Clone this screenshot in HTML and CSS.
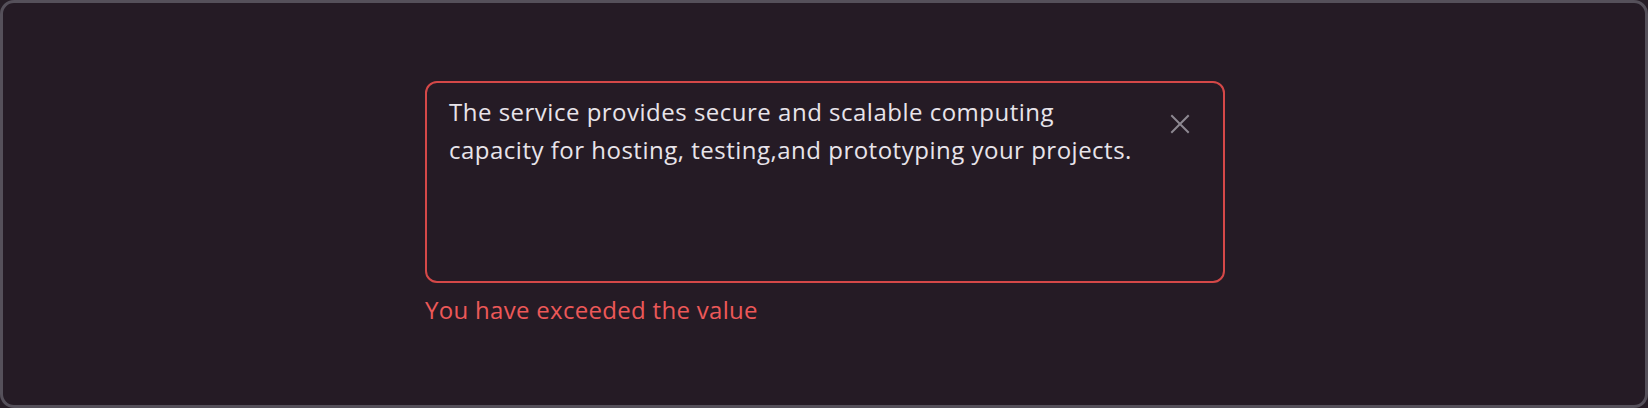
FILE: index.html
```html
<!DOCTYPE html>
<html lang="en">
<head>
<meta charset="utf-8">
<title>Textarea error</title>
<link rel="stylesheet" href="styles.css">
</head>
<body>
<div class="frame">
  <div class="field-wrap">
    <div class="field">
      <p class="field-text">The service provides secure and scalable computing capacity for hosting, testing,and prototyping your projects.</p>
      <button class="clear" type="button" aria-label="Clear">
        <svg width="20" height="20" viewBox="0 0 20 20"><path d="M2 2 L18 18 M18 2 L2 18" stroke="currentColor" stroke-width="2" stroke-linecap="square" fill="none"/></svg>
      </button>
    </div>
    <div class="error">You have exceeded the value</div>
  </div>
</div>
</body>
</html>
```

FILE: styles.css
```css
html, body {
  margin: 0;
  padding: 0;
  background: #261d26;
}
.frame {
  box-sizing: border-box;
  width: 1648px;
  height: 408px;
  border: 3px solid #55505a;
  border-radius: 14px;
  background: #251b25;
  padding: 78px 0 0 422px;
  font-family: "Open Sans", "Lato", sans-serif;
}
.field-wrap {
  width: 800px;
}
.field {
  box-sizing: border-box;
  height: 202px;
  border: 2px solid #d54848;
  border-radius: 12px;
  display: flex;
  align-items: flex-start;
  justify-content: space-between;
  padding: 10px 33px 0 22px;
}
.field-text {
  margin: 0;
  color: #e8e4ea;
  font-size: 24px;
  line-height: 38px;
  letter-spacing: 0.5px;
  width: 700px;
}
.clear {
  border: 0;
  background: none;
  padding: 0;
  margin-top: 21px;
  color: #8d8891;
  width: 20px;
  height: 20px;
  flex: none;
  display: block;
}
.clear svg { display: block; }
.error {
  margin-top: 10px;
  color: #ec5858;
  font-size: 24px;
  line-height: 34px;
  letter-spacing: 0.3px;
}
```
